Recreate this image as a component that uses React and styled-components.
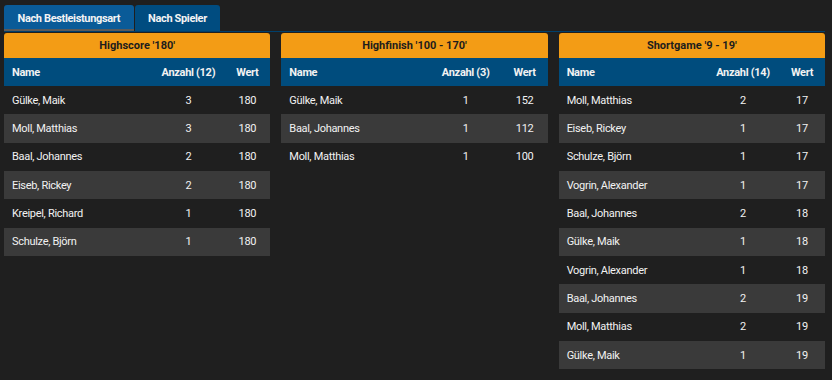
import styled, { createGlobalStyle } from "styled-components";

const GlobalStyle = createGlobalStyle`
  html, body {
    margin: 0;
    padding: 0;
    background: #1f1f1f;
  }
  body {
    font-family: Roboto, "Liberation Sans", sans-serif;
    color: #f2f2f2;
  }
`;

const Page = styled.div`
  width: 832px;
  height: 380px;
  padding: 5px 7px 0 4px;
  box-sizing: border-box;
  overflow: hidden;
`;

const Tabs = styled.div`
  display: flex;
  height: 26px;
  border-bottom: 1px solid #003f6b;
`;

const Tab = styled.div`
  display: flex;
  align-items: center;
  padding: 0 13.5px;
  margin-right: 1px;
  font-size: 11px;
  letter-spacing: -0.35px;
  font-weight: 700;
  color: #f4f4f4;
  background: ${(p) => (p.$active ? "#0a5b98" : "#004c80")};
  border-radius: 3px 3px 0 0;
  box-shadow: ${(p) => (p.$active ? "inset 0 -2px 0 #5a5a5a" : "none")};
`;

const Panels = styled.div`
  display: grid;
  grid-template-columns: repeat(3, 1fr);
  column-gap: 11px;
  margin-top: 1px;
`;

const Panel = styled.div`
  display: flex;
  flex-direction: column;
`;

const Title = styled.div`
  height: 25px;
  display: flex;
  align-items: center;
  justify-content: center;
  background: #f39c15;
  color: #1d1d1d;
  font-size: 11px;
  font-weight: 700;
  border-radius: 3px 3px 0 0;
`;

const Row = styled.div`
  display: grid;
  grid-template-columns: 1fr 72px 46px;
  align-items: center;
  height: ${(p) => (p.$head ? "28px" : "28.33px")};
  padding-left: 8px;
  font-size: 11px;
  letter-spacing: -0.3px;
  font-weight: ${(p) => (p.$head ? 700 : 400)};
  background: ${(p) => (p.$head ? "#004c7d" : p.$alt ? "#3a3a3a" : "transparent")};
  color: #f2f2f2;
`;

const Cell = styled.span`
  text-align: ${(p) => (p.$num ? "center" : "left")};
  white-space: nowrap;
`;

const tables = [
  {
    title: "Highscore '180'",
    total: 12,
    rows: [
      ["Gülke, Maik", 3, 180],
      ["Moll, Matthias", 3, 180],
      ["Baal, Johannes", 2, 180],
      ["Eiseb, Rickey", 2, 180],
      ["Kreipel, Richard", 1, 180],
      ["Schulze, Björn", 1, 180],
    ],
  },
  {
    title: "Highfinish '100 - 170'",
    total: 3,
    rows: [
      ["Gülke, Maik", 1, 152],
      ["Baal, Johannes", 1, 112],
      ["Moll, Matthias", 1, 100],
    ],
  },
  {
    title: "Shortgame '9 - 19'",
    total: 14,
    rows: [
      ["Moll, Matthias", 2, 17],
      ["Eiseb, Rickey", 1, 17],
      ["Schulze, Björn", 1, 17],
      ["Vogrin, Alexander", 1, 17],
      ["Baal, Johannes", 2, 18],
      ["Gülke, Maik", 1, 18],
      ["Vogrin, Alexander", 1, 18],
      ["Baal, Johannes", 2, 19],
      ["Moll, Matthias", 2, 19],
      ["Gülke, Maik", 1, 19],
    ],
  },
];

export default function App() {
  return (
    <Page>
      <GlobalStyle />
      <Tabs>
        <Tab $active>Nach Bestleistungsart</Tab>
        <Tab>Nach Spieler</Tab>
      </Tabs>
      <Panels>
        {tables.map((t) => (
          <Panel key={t.title}>
            <Title>{t.title}</Title>
            <Row $head>
              <Cell>Name</Cell>
              <Cell $num>Anzahl ({t.total})</Cell>
              <Cell $num>Wert</Cell>
            </Row>
            {t.rows.map((r, i) => (
              <Row key={i} $alt={i % 2 === 1}>
                <Cell>{r[0]}</Cell>
                <Cell $num>{r[1]}</Cell>
                <Cell $num>{r[2]}</Cell>
              </Row>
            ))}
          </Panel>
        ))}
      </Panels>
    </Page>
  );
}
